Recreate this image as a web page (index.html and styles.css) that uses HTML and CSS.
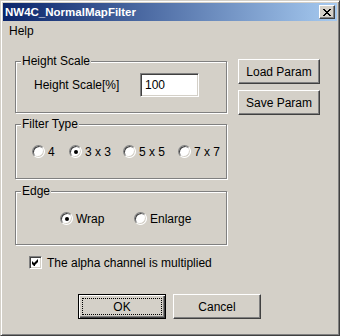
FILE: index.html
```html
<!DOCTYPE html>
<html lang="en">

<head>
    <meta charset="UTF-8">
    <meta name="viewport" content="width=device-width, initial-scale=1.0">
    <title>NW4C_NormalMapFilter</title>
    <link rel="stylesheet" href="styles.css">
</head>

<body>
    <div class="window">
        <div class="titlebar">
            <span class="title">NW4C_NormalMapFilter</span>
            <button class="closeBtn">
                <svg width="8" height="7" viewBox="0 0 8 7">
                    <path d="M0 0h2v1h1v1h2v-1h1v-1h2v1h-1v1h-1v1h-1v1h1v1h1v1h1v1h-2v-1h-1v-1h-2v1h-1v1h-2v-1h1v-1h1v-1h1v-1h-1v-1h-1v-1h-1z" fill="#000"/>
                </svg>
            </button>
        </div>
        <div class="menubar">
            <span class="menuItem">Help</span>
        </div>
        <div class="client">
            <div class="top">
                <div class="leftCol">
                    <fieldset class="group groupScale">
                        <legend>Height Scale</legend>
                        <div class="scaleRow">
                            <span class="scaleLabel">Height Scale[%]</span>
                            <input class="field" type="text" value="100">
                        </div>
                    </fieldset>
                    <fieldset class="group groupFilter">
                        <legend>Filter Type</legend>
                        <div class="radioRow filterRow">
                            <label class="radio"><span class="dot"></span>4</label>
                            <label class="radio"><span class="dot checked"></span>3 x 3</label>
                            <label class="radio"><span class="dot"></span>5 x 5</label>
                            <label class="radio"><span class="dot"></span>7 x 7</label>
                        </div>
                    </fieldset>
                    <fieldset class="group groupEdge">
                        <legend>Edge</legend>
                        <div class="radioRow edgeRow">
                            <label class="radio"><span class="dot checked"></span>Wrap</label>
                            <label class="radio"><span class="dot"></span>Enlarge</label>
                        </div>
                    </fieldset>
                </div>
                <div class="rightCol">
                    <button class="btn sideBtn">Load Param</button>
                    <button class="btn sideBtn">Save Param</button>
                </div>
            </div>
            <label class="check">
                <span class="box">
                    <svg width="7" height="7" viewBox="0 0 7 7">
                        <path d="M6 0v3l-1 1v0l-2 2v1h-1l-2-2v-3l2 2z" fill="#000"/>
                    </svg>
                </span>
                The alpha channel is multiplied
            </label>
            <div class="actions">
                <button class="btn okBtn"><span class="focus">OK</span></button>
                <button class="btn">Cancel</button>
            </div>
        </div>
    </div>
</body>

</html>
```

FILE: styles.css
```css
* {
    margin: 0;
    padding: 0;
    box-sizing: border-box;
}

body {
    background: #d4d0c8;
    font-family: "Liberation Sans", Arial, sans-serif;
    font-size: 12px;
    color: #000;
}

.window {
    width: 340px;
    height: 336px;
    padding: 2px;
    background: #d4d0c8;
    border: 1px solid;
    border-color: #d4d0c8 #404040 #404040 #d4d0c8;
    box-shadow: inset 1px 1px #fff, inset -1px -1px #808080;
}

.titlebar {
    height: 18px;
    display: flex;
    align-items: center;
    justify-content: space-between;
    padding: 0 2px;
    background: linear-gradient(to right, #0a246a, #a6caf0);
}

.title {
    color: #fff;
    font-weight: bold;
    font-size: 11.5px;
}

.closeBtn {
    width: 16px;
    height: 14px;
    display: flex;
    align-items: center;
    justify-content: center;
    background: #d4d0c8;
    border: 1px solid;
    border-color: #fff #404040 #404040 #fff;
    box-shadow: inset -1px -1px #808080;
}

.menubar {
    height: 19px;
    display: flex;
    align-items: center;
    padding-left: 6px;
}

.client {
    padding: 14px 0 0 12px;
}

.top {
    display: flex;
    gap: 11px;
}

.leftCol {
    width: 212px;
}

.group {
    border: 1px solid #808080;
    box-shadow: inset 1px 1px #fff, 1px 1px #fff;
}

.group legend {
    margin-left: 5px;
    padding: 0 1px;
    line-height: 15px;
    background: #d4d0c8;
}

.groupScale {
    padding: 4px 0 15px 0;
}

.groupFilter {
    margin-top: 4px;
    padding: 12px 0 19px 0;
}

.groupEdge {
    margin-top: 5px;
    padding: 12px 0 18px 0;
}

.scaleRow {
    display: flex;
    align-items: center;
    padding-left: 18px;
}

.scaleLabel {
    width: 106px;
}

.field {
    width: 59px;
    height: 24px;
    padding-left: 4px;
    font: inherit;
    background: #fff;
    border: 1px solid;
    border-color: #808080 #fff #fff #808080;
    box-shadow: inset 1px 1px #404040, inset -1px -1px #d4d0c8;
    outline: none;
}

.radioRow {
    display: grid;
    height: 15px;
    align-items: center;
}

.filterRow {
    grid-template-columns: 37px 54px 55px auto;
    padding-left: 16px;
}

.edgeRow {
    grid-template-columns: 74px auto;
    padding-left: 44px;
}

.radio {
    display: flex;
    align-items: center;
    gap: 3px;
}

.dot {
    width: 13px;
    height: 13px;
    display: flex;
    align-items: center;
    justify-content: center;
    border-radius: 50%;
    background: #fff;
    border: 1px solid;
    border-color: #808080 #fff #fff #808080;
    box-shadow: inset 1px 1px #404040, inset -1px -1px #d4d0c8;
}

.checked::after {
    content: "";
    width: 4px;
    height: 4px;
    border-radius: 50%;
    background: #000;
}

.check {
    display: flex;
    align-items: center;
    gap: 5px;
    height: 15px;
    margin: 10px 0 0 14px;
}

.box {
    width: 13px;
    height: 13px;
    display: flex;
    align-items: center;
    justify-content: center;
    background: #fff;
    border: 1px solid;
    border-color: #808080 #fff #fff #808080;
    box-shadow: inset 1px 1px #404040, inset -1px -1px #d4d0c8;
}

.rightCol {
    display: flex;
    flex-direction: column;
    gap: 6px;
    margin-top: 5px;
}

.btn {
    height: 25px;
    font: inherit;
    color: #000;
    background: #d4d0c8;
    border: 1px solid;
    border-color: #fff #404040 #404040 #fff;
    box-shadow: inset -1px -1px #808080;
}

.sideBtn {
    width: 82px;
}

.actions {
    display: flex;
    gap: 7px;
    margin: 24px 0 0 63px;
}

.actions .btn {
    width: 88px;
}

.okBtn {
    padding: 3px;
    border-color: #000;
    box-shadow: inset 1px 1px #fff, inset -1px -1px #404040, inset -2px -2px #808080;
}

.focus {
    display: flex;
    align-items: center;
    justify-content: center;
    height: 100%;
    border: 1px dotted #000;
}
```
